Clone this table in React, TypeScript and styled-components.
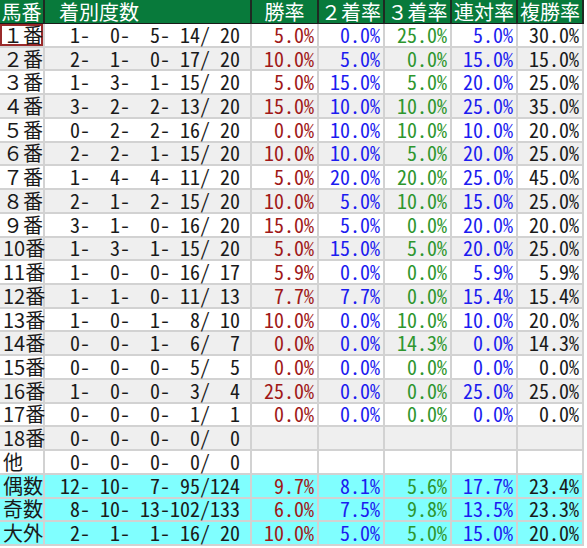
import React from "react";
import styled, { createGlobalStyle } from "styled-components";

const Global = createGlobalStyle`
  html, body { margin: 0; padding: 0; background: #ffffff; }
  body { font-family: "Noto Sans CJK JP", "DejaVu Sans", sans-serif; }
`;

const Table = styled.div`
  display: grid;
  grid-template-columns: 45px 207px 67px 66px 67px 66px 66px;
  grid-template-rows: 24px repeat(22, minmax(0, 1fr));
  width: 584px;
  height: 546px;
  font-family: "Noto Sans CJK JP", sans-serif;
  font-size: 20px;
  line-height: 1;
`;

const Head = styled.div<{ $align?: "left" | "center" }>`
  box-sizing: border-box;
  min-height: 0;
  background: #087a3b;
  color: #ffffff;
  font-size: 20px;
  display: flex;
  align-items: center;
  justify-content: ${(p) => (p.$align === "left" ? "flex-start" : "center")};
  padding-left: ${(p) => (p.$align === "left" ? "14px" : "0")};
  border-right: 2px solid #1f2a22;
  border-bottom: 1px solid #1a1a1a;
  white-space: nowrap;
`;

type Tone = "white" | "gray" | "cyan";
const bg = (t: Tone) => (t === "gray" ? "#efefef" : t === "cyan" ? "#80ffff" : "#ffffff");

const Cell = styled.div<{
  $tone: Tone;
  $color?: string;
  $align?: "left" | "right";
  $selected?: boolean;
  $numeric?: boolean;
}>`
  box-sizing: border-box;
  min-height: 0;
  background: ${(p) => bg(p.$tone)};
  color: ${(p) => p.$color || "#1a1a1a"};
  display: flex;
  align-items: center;
  justify-content: ${(p) => (p.$align === "left" ? "flex-start" : "flex-end")};
  padding: ${(p) => (p.$align === "left" ? "0 0 0 3px" : "0 3px 0 0")};
  border-right: 2px solid #d2d2d2;
  border-bottom: 2px solid #d2d2d2;
  white-space: nowrap;
  font-feature-settings: ${(p) => (p.$numeric ? '"hwid" 1' : "normal")};
  box-shadow: ${(p) => (p.$selected ? "inset 0 0 0 2px #9a2a2a" : "none")};
`;

const Record = styled.div`
  display: flex;
  align-items: center;
  padding-left: 2px;
  width: 100%;
`;

const Num = styled.span`
  display: inline-block;
  width: 30px;
  text-align: right;
`;

const Sep = styled.span`
  display: inline-block;
  width: 10px;
  text-align: left;
`;

type Row = {
  label: string;
  rec: number[];
  pct: (string | null)[];
  tone: Tone;
};

const raw: [string, number[], (string | null)[]][] = [
  ["１番", [1, 0, 5, 14, 20], ["5.0", "0.0", "25.0", "5.0", "30.0"]],
  ["２番", [2, 1, 0, 17, 20], ["10.0", "5.0", "0.0", "15.0", "15.0"]],
  ["３番", [1, 3, 1, 15, 20], ["5.0", "15.0", "5.0", "20.0", "25.0"]],
  ["４番", [3, 2, 2, 13, 20], ["15.0", "10.0", "10.0", "25.0", "35.0"]],
  ["５番", [0, 2, 2, 16, 20], ["0.0", "10.0", "10.0", "10.0", "20.0"]],
  ["６番", [2, 2, 1, 15, 20], ["10.0", "10.0", "5.0", "20.0", "25.0"]],
  ["７番", [1, 4, 4, 11, 20], ["5.0", "20.0", "20.0", "25.0", "45.0"]],
  ["８番", [2, 1, 2, 15, 20], ["10.0", "5.0", "10.0", "15.0", "25.0"]],
  ["９番", [3, 1, 0, 16, 20], ["15.0", "5.0", "0.0", "20.0", "20.0"]],
  ["10番", [1, 3, 1, 15, 20], ["5.0", "15.0", "5.0", "20.0", "25.0"]],
  ["11番", [1, 0, 0, 16, 17], ["5.9", "0.0", "0.0", "5.9", "5.9"]],
  ["12番", [1, 1, 0, 11, 13], ["7.7", "7.7", "0.0", "15.4", "15.4"]],
  ["13番", [1, 0, 1, 8, 10], ["10.0", "0.0", "10.0", "10.0", "20.0"]],
  ["14番", [0, 0, 1, 6, 7], ["0.0", "0.0", "14.3", "0.0", "14.3"]],
  ["15番", [0, 0, 0, 5, 5], ["0.0", "0.0", "0.0", "0.0", "0.0"]],
  ["16番", [1, 0, 0, 3, 4], ["25.0", "0.0", "0.0", "25.0", "25.0"]],
  ["17番", [0, 0, 0, 1, 1], ["0.0", "0.0", "0.0", "0.0", "0.0"]],
  ["18番", [0, 0, 0, 0, 0], [null, null, null, null, null]],
  ["他", [0, 0, 0, 0, 0], [null, null, null, null, null]],
  ["偶数", [12, 10, 7, 95, 124], ["9.7", "8.1", "5.6", "17.7", "23.4"]],
  ["奇数", [8, 10, 13, 102, 133], ["6.0", "7.5", "9.8", "13.5", "23.3"]],
  ["大外", [2, 1, 1, 16, 20], ["10.0", "5.0", "5.0", "15.0", "20.0"]],
];

const rows: Row[] = raw.map(([label, rec, pct], i) => ({
  label,
  rec,
  pct,
  tone: i >= 19 ? "cyan" : i % 2 === 1 ? "gray" : "white",
}));

const pctColors = ["#a01818", "#1c1cf0", "#2e962e", "#1c1cf0", "#1a1a1a"];
const headers = ["勝率", "２着率", "３着率", "連対率", "複勝率"];
const seps = ["-", "-", "-", "/"];

export default function App() {
  return (
    <>
      <Global />
      <Table>
        <Head>馬番</Head>
        <Head $align="left">着別度数</Head>
        {headers.map((h) => (
          <Head key={h}>{h}</Head>
        ))}
        {rows.map((r, i) => (
          <React.Fragment key={r.label}>
            <Cell $tone={r.tone} $align="left" $selected={i === 0}>
              {r.label}
            </Cell>
            <Cell $tone={r.tone} $align="left" $numeric>
              <Record>
                {r.rec.map((n, k) => (
                  <React.Fragment key={k}>
                    <Num>{n}</Num>
                    {k < 4 && <Sep>{seps[k]}</Sep>}
                  </React.Fragment>
                ))}
              </Record>
            </Cell>
            {r.pct.map((p, k) => (
              <Cell key={k} $tone={r.tone} $color={pctColors[k]} $numeric>
                {p !== null ? `${p}%` : ""}
              </Cell>
            ))}
          </React.Fragment>
        ))}
      </Table>
    </>
  );
}
